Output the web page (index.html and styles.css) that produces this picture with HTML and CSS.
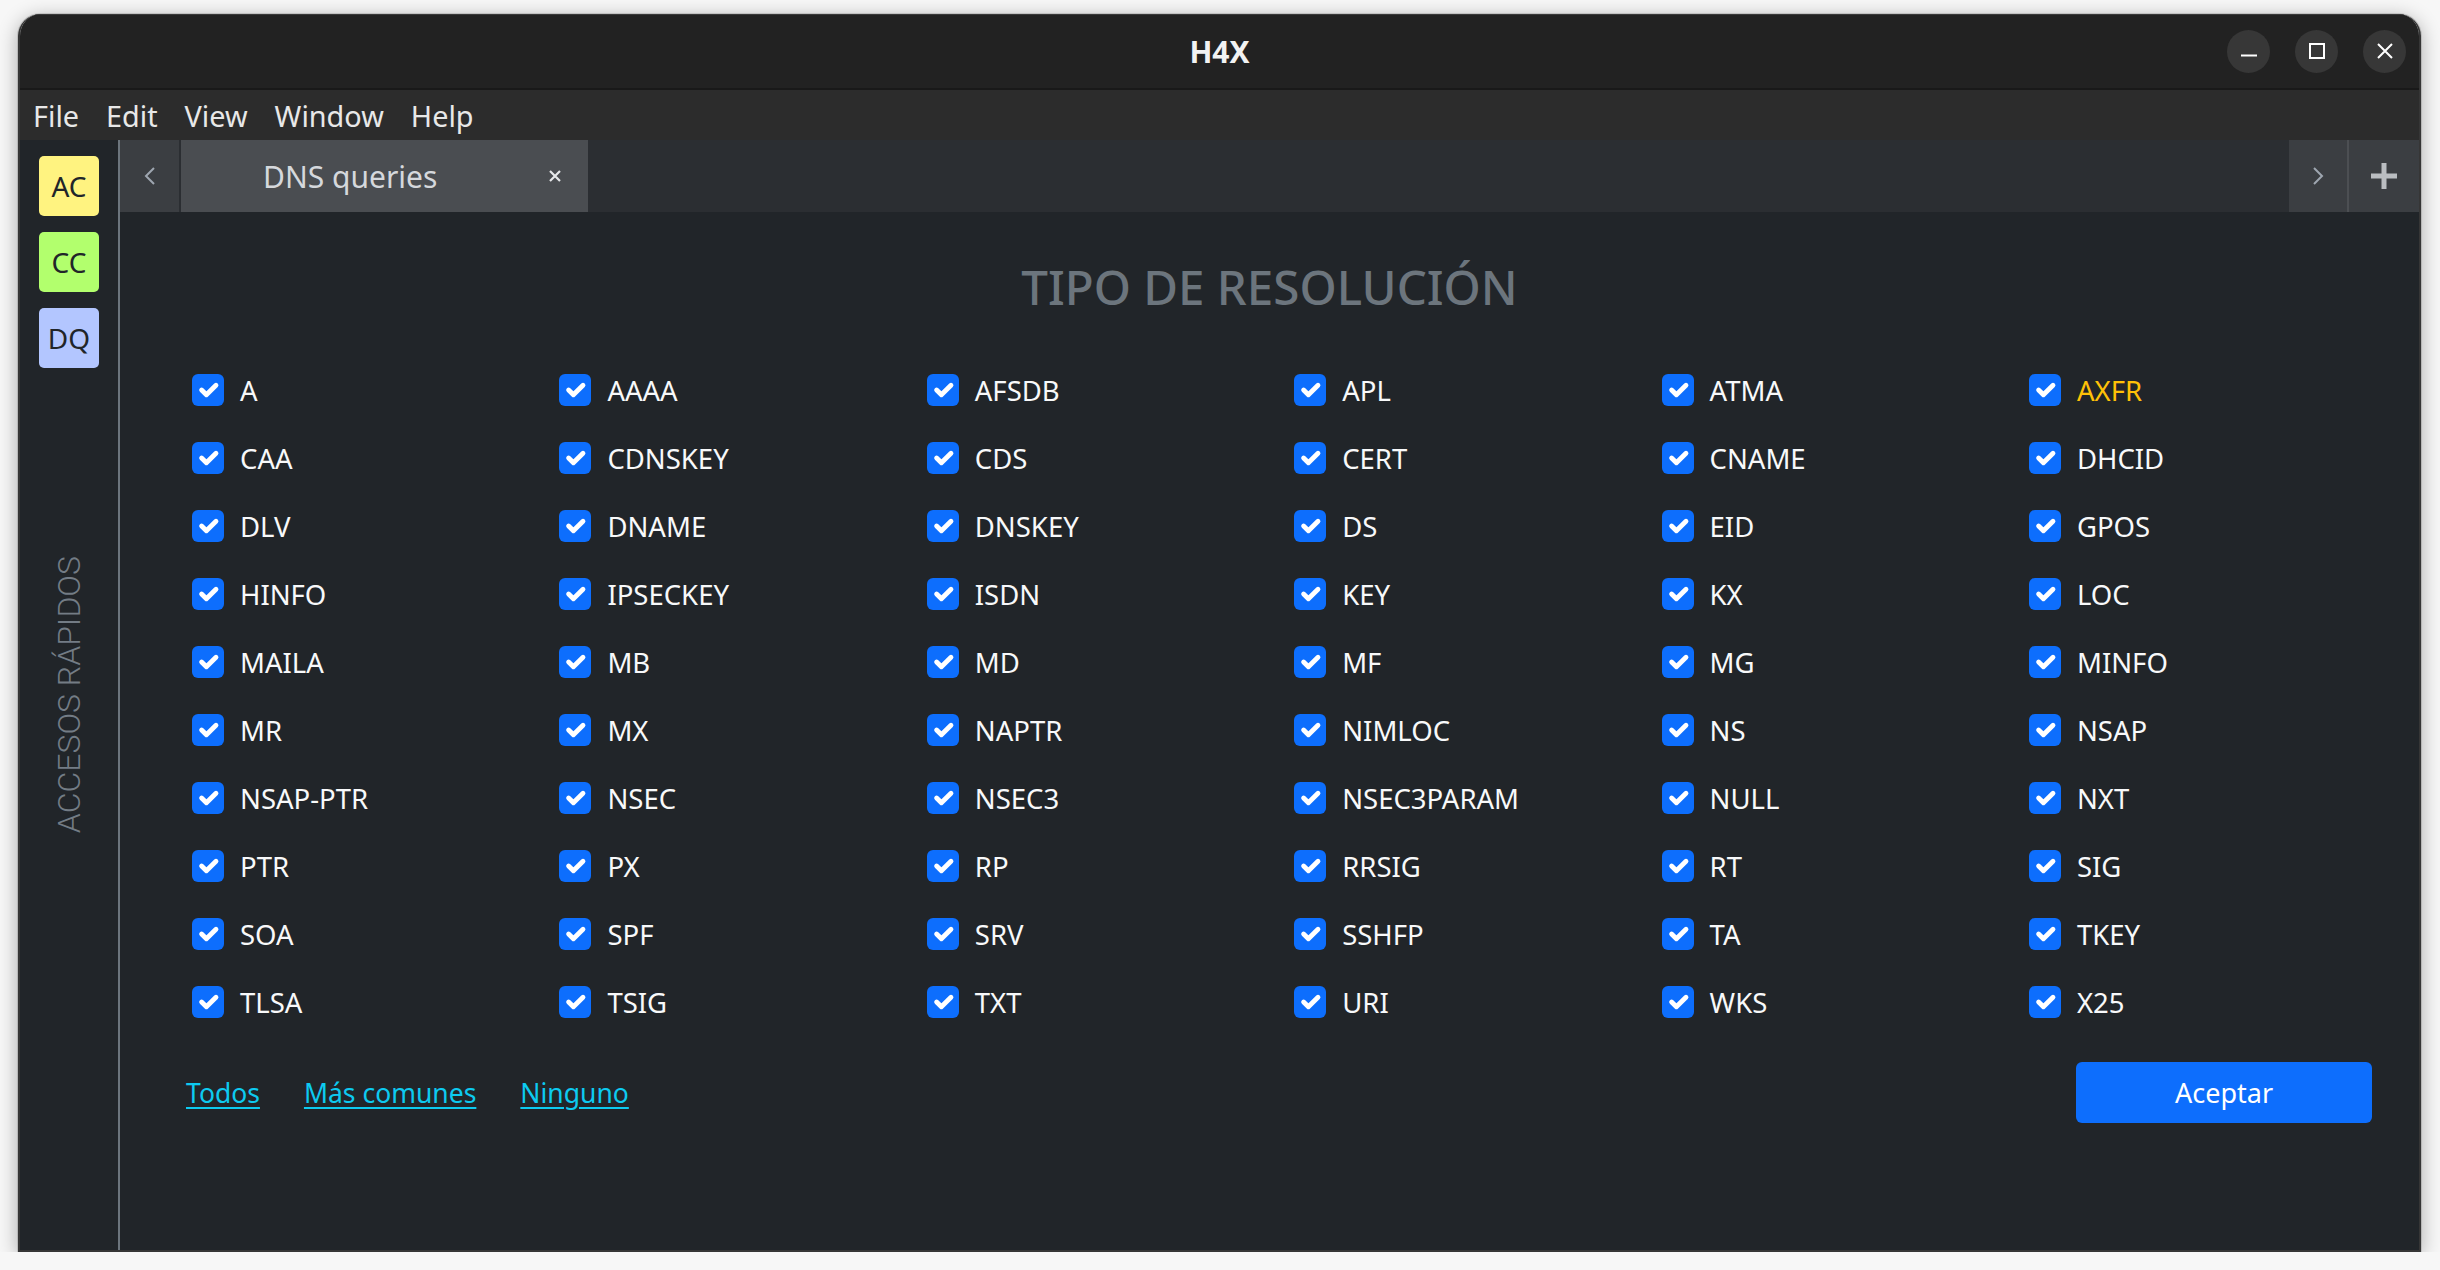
FILE: index.html
```html
<!DOCTYPE html>
<html lang="es">
<head>
<meta charset="utf-8">
<title>H4X</title>
<link rel="stylesheet" href="styles.css">
</head>
<body>
<div class="window">
  <header class="titlebar">
    <div></div>
    <div class="title">H4X</div>
    <div class="wbtns">
      <span class="wbtn"><svg width="16" height="16" viewBox="0 0 16 16"><path d="M0 12.5h16" stroke="#fff" stroke-width="2"/></svg></span>
      <span class="wbtn"><svg width="16" height="16" viewBox="0 0 16 16"><rect x="1" y="1" width="14" height="14" fill="none" stroke="#fff" stroke-width="2"/></svg></span>
      <span class="wbtn"><svg width="16" height="16" viewBox="0 0 16 16"><path d="M1 1l14 14M15 1L1 15" stroke="#fff" stroke-width="2"/></svg></span>
    </div>
  </header>
  <nav class="menubar">
    <span>File</span><span>Edit</span><span>View</span><span>Window</span><span>Help</span>
  </nav>
  <div class="body">
    <aside class="sidebar">
      <div class="quick">
        <span class="qa ac">AC</span>
        <span class="qa cc">CC</span>
        <span class="qa dq">DQ</span>
      </div>
      <div class="vtext">ACCESOS RÁPIDOS</div>
    </aside>
    <main class="main">
      <div class="tabbar">
        <span class="tb-btn"><svg width="12" height="20" viewBox="0 0 12 20"><path d="M10 2L2 10l8 8" fill="none" stroke="#9ea6b0" stroke-width="2"/></svg></span>
        <div class="tab"><span>DNS queries</span><svg class="tab-x" width="12" height="12" viewBox="0 0 12 12"><path d="M1 1l10 10M11 1L1 11" stroke="#e6e8ea" stroke-width="2.2"/></svg></div>
        <div class="tab-fill"></div>
        <span class="tb-btn next"><svg width="12" height="20" viewBox="0 0 12 20"><path d="M2 2l8 8-8 8" fill="none" stroke="#9ea6b0" stroke-width="2"/></svg></span>
        <span class="tb-plus"><svg width="26" height="26" viewBox="0 0 26 26"><path d="M13 0v26M0 13h26" stroke="#babdc1" stroke-width="5"/></svg></span>
      </div>
      <section class="content">
        <h1 class="heading">TIPO DE RESOLUCIÓN</h1>
        <div class="grid">
          <label class="item"><span class="cb"><svg viewBox="0 0 20 20"><path d="m6 10 3 3 6-6" fill="none" stroke="#fff" stroke-width="3" stroke-linecap="round" stroke-linejoin="round"/></svg></span>A</label>
          <label class="item"><span class="cb"><svg viewBox="0 0 20 20"><path d="m6 10 3 3 6-6" fill="none" stroke="#fff" stroke-width="3" stroke-linecap="round" stroke-linejoin="round"/></svg></span>AAAA</label>
          <label class="item"><span class="cb"><svg viewBox="0 0 20 20"><path d="m6 10 3 3 6-6" fill="none" stroke="#fff" stroke-width="3" stroke-linecap="round" stroke-linejoin="round"/></svg></span>AFSDB</label>
          <label class="item"><span class="cb"><svg viewBox="0 0 20 20"><path d="m6 10 3 3 6-6" fill="none" stroke="#fff" stroke-width="3" stroke-linecap="round" stroke-linejoin="round"/></svg></span>APL</label>
          <label class="item"><span class="cb"><svg viewBox="0 0 20 20"><path d="m6 10 3 3 6-6" fill="none" stroke="#fff" stroke-width="3" stroke-linecap="round" stroke-linejoin="round"/></svg></span>ATMA</label>
          <label class="item warn"><span class="cb"><svg viewBox="0 0 20 20"><path d="m6 10 3 3 6-6" fill="none" stroke="#fff" stroke-width="3" stroke-linecap="round" stroke-linejoin="round"/></svg></span>AXFR</label>

          <label class="item"><span class="cb"><svg viewBox="0 0 20 20"><path d="m6 10 3 3 6-6" fill="none" stroke="#fff" stroke-width="3" stroke-linecap="round" stroke-linejoin="round"/></svg></span>CAA</label>
          <label class="item"><span class="cb"><svg viewBox="0 0 20 20"><path d="m6 10 3 3 6-6" fill="none" stroke="#fff" stroke-width="3" stroke-linecap="round" stroke-linejoin="round"/></svg></span>CDNSKEY</label>
          <label class="item"><span class="cb"><svg viewBox="0 0 20 20"><path d="m6 10 3 3 6-6" fill="none" stroke="#fff" stroke-width="3" stroke-linecap="round" stroke-linejoin="round"/></svg></span>CDS</label>
          <label class="item"><span class="cb"><svg viewBox="0 0 20 20"><path d="m6 10 3 3 6-6" fill="none" stroke="#fff" stroke-width="3" stroke-linecap="round" stroke-linejoin="round"/></svg></span>CERT</label>
          <label class="item"><span class="cb"><svg viewBox="0 0 20 20"><path d="m6 10 3 3 6-6" fill="none" stroke="#fff" stroke-width="3" stroke-linecap="round" stroke-linejoin="round"/></svg></span>CNAME</label>
          <label class="item"><span class="cb"><svg viewBox="0 0 20 20"><path d="m6 10 3 3 6-6" fill="none" stroke="#fff" stroke-width="3" stroke-linecap="round" stroke-linejoin="round"/></svg></span>DHCID</label>

          <label class="item"><span class="cb"><svg viewBox="0 0 20 20"><path d="m6 10 3 3 6-6" fill="none" stroke="#fff" stroke-width="3" stroke-linecap="round" stroke-linejoin="round"/></svg></span>DLV</label>
          <label class="item"><span class="cb"><svg viewBox="0 0 20 20"><path d="m6 10 3 3 6-6" fill="none" stroke="#fff" stroke-width="3" stroke-linecap="round" stroke-linejoin="round"/></svg></span>DNAME</label>
          <label class="item"><span class="cb"><svg viewBox="0 0 20 20"><path d="m6 10 3 3 6-6" fill="none" stroke="#fff" stroke-width="3" stroke-linecap="round" stroke-linejoin="round"/></svg></span>DNSKEY</label>
          <label class="item"><span class="cb"><svg viewBox="0 0 20 20"><path d="m6 10 3 3 6-6" fill="none" stroke="#fff" stroke-width="3" stroke-linecap="round" stroke-linejoin="round"/></svg></span>DS</label>
          <label class="item"><span class="cb"><svg viewBox="0 0 20 20"><path d="m6 10 3 3 6-6" fill="none" stroke="#fff" stroke-width="3" stroke-linecap="round" stroke-linejoin="round"/></svg></span>EID</label>
          <label class="item"><span class="cb"><svg viewBox="0 0 20 20"><path d="m6 10 3 3 6-6" fill="none" stroke="#fff" stroke-width="3" stroke-linecap="round" stroke-linejoin="round"/></svg></span>GPOS</label>

          <label class="item"><span class="cb"><svg viewBox="0 0 20 20"><path d="m6 10 3 3 6-6" fill="none" stroke="#fff" stroke-width="3" stroke-linecap="round" stroke-linejoin="round"/></svg></span>HINFO</label>
          <label class="item"><span class="cb"><svg viewBox="0 0 20 20"><path d="m6 10 3 3 6-6" fill="none" stroke="#fff" stroke-width="3" stroke-linecap="round" stroke-linejoin="round"/></svg></span>IPSECKEY</label>
          <label class="item"><span class="cb"><svg viewBox="0 0 20 20"><path d="m6 10 3 3 6-6" fill="none" stroke="#fff" stroke-width="3" stroke-linecap="round" stroke-linejoin="round"/></svg></span>ISDN</label>
          <label class="item"><span class="cb"><svg viewBox="0 0 20 20"><path d="m6 10 3 3 6-6" fill="none" stroke="#fff" stroke-width="3" stroke-linecap="round" stroke-linejoin="round"/></svg></span>KEY</label>
          <label class="item"><span class="cb"><svg viewBox="0 0 20 20"><path d="m6 10 3 3 6-6" fill="none" stroke="#fff" stroke-width="3" stroke-linecap="round" stroke-linejoin="round"/></svg></span>KX</label>
          <label class="item"><span class="cb"><svg viewBox="0 0 20 20"><path d="m6 10 3 3 6-6" fill="none" stroke="#fff" stroke-width="3" stroke-linecap="round" stroke-linejoin="round"/></svg></span>LOC</label>

          <label class="item"><span class="cb"><svg viewBox="0 0 20 20"><path d="m6 10 3 3 6-6" fill="none" stroke="#fff" stroke-width="3" stroke-linecap="round" stroke-linejoin="round"/></svg></span>MAILA</label>
          <label class="item"><span class="cb"><svg viewBox="0 0 20 20"><path d="m6 10 3 3 6-6" fill="none" stroke="#fff" stroke-width="3" stroke-linecap="round" stroke-linejoin="round"/></svg></span>MB</label>
          <label class="item"><span class="cb"><svg viewBox="0 0 20 20"><path d="m6 10 3 3 6-6" fill="none" stroke="#fff" stroke-width="3" stroke-linecap="round" stroke-linejoin="round"/></svg></span>MD</label>
          <label class="item"><span class="cb"><svg viewBox="0 0 20 20"><path d="m6 10 3 3 6-6" fill="none" stroke="#fff" stroke-width="3" stroke-linecap="round" stroke-linejoin="round"/></svg></span>MF</label>
          <label class="item"><span class="cb"><svg viewBox="0 0 20 20"><path d="m6 10 3 3 6-6" fill="none" stroke="#fff" stroke-width="3" stroke-linecap="round" stroke-linejoin="round"/></svg></span>MG</label>
          <label class="item"><span class="cb"><svg viewBox="0 0 20 20"><path d="m6 10 3 3 6-6" fill="none" stroke="#fff" stroke-width="3" stroke-linecap="round" stroke-linejoin="round"/></svg></span>MINFO</label>

          <label class="item"><span class="cb"><svg viewBox="0 0 20 20"><path d="m6 10 3 3 6-6" fill="none" stroke="#fff" stroke-width="3" stroke-linecap="round" stroke-linejoin="round"/></svg></span>MR</label>
          <label class="item"><span class="cb"><svg viewBox="0 0 20 20"><path d="m6 10 3 3 6-6" fill="none" stroke="#fff" stroke-width="3" stroke-linecap="round" stroke-linejoin="round"/></svg></span>MX</label>
          <label class="item"><span class="cb"><svg viewBox="0 0 20 20"><path d="m6 10 3 3 6-6" fill="none" stroke="#fff" stroke-width="3" stroke-linecap="round" stroke-linejoin="round"/></svg></span>NAPTR</label>
          <label class="item"><span class="cb"><svg viewBox="0 0 20 20"><path d="m6 10 3 3 6-6" fill="none" stroke="#fff" stroke-width="3" stroke-linecap="round" stroke-linejoin="round"/></svg></span>NIMLOC</label>
          <label class="item"><span class="cb"><svg viewBox="0 0 20 20"><path d="m6 10 3 3 6-6" fill="none" stroke="#fff" stroke-width="3" stroke-linecap="round" stroke-linejoin="round"/></svg></span>NS</label>
          <label class="item"><span class="cb"><svg viewBox="0 0 20 20"><path d="m6 10 3 3 6-6" fill="none" stroke="#fff" stroke-width="3" stroke-linecap="round" stroke-linejoin="round"/></svg></span>NSAP</label>

          <label class="item"><span class="cb"><svg viewBox="0 0 20 20"><path d="m6 10 3 3 6-6" fill="none" stroke="#fff" stroke-width="3" stroke-linecap="round" stroke-linejoin="round"/></svg></span>NSAP-PTR</label>
          <label class="item"><span class="cb"><svg viewBox="0 0 20 20"><path d="m6 10 3 3 6-6" fill="none" stroke="#fff" stroke-width="3" stroke-linecap="round" stroke-linejoin="round"/></svg></span>NSEC</label>
          <label class="item"><span class="cb"><svg viewBox="0 0 20 20"><path d="m6 10 3 3 6-6" fill="none" stroke="#fff" stroke-width="3" stroke-linecap="round" stroke-linejoin="round"/></svg></span>NSEC3</label>
          <label class="item"><span class="cb"><svg viewBox="0 0 20 20"><path d="m6 10 3 3 6-6" fill="none" stroke="#fff" stroke-width="3" stroke-linecap="round" stroke-linejoin="round"/></svg></span>NSEC3PARAM</label>
          <label class="item"><span class="cb"><svg viewBox="0 0 20 20"><path d="m6 10 3 3 6-6" fill="none" stroke="#fff" stroke-width="3" stroke-linecap="round" stroke-linejoin="round"/></svg></span>NULL</label>
          <label class="item"><span class="cb"><svg viewBox="0 0 20 20"><path d="m6 10 3 3 6-6" fill="none" stroke="#fff" stroke-width="3" stroke-linecap="round" stroke-linejoin="round"/></svg></span>NXT</label>

          <label class="item"><span class="cb"><svg viewBox="0 0 20 20"><path d="m6 10 3 3 6-6" fill="none" stroke="#fff" stroke-width="3" stroke-linecap="round" stroke-linejoin="round"/></svg></span>PTR</label>
          <label class="item"><span class="cb"><svg viewBox="0 0 20 20"><path d="m6 10 3 3 6-6" fill="none" stroke="#fff" stroke-width="3" stroke-linecap="round" stroke-linejoin="round"/></svg></span>PX</label>
          <label class="item"><span class="cb"><svg viewBox="0 0 20 20"><path d="m6 10 3 3 6-6" fill="none" stroke="#fff" stroke-width="3" stroke-linecap="round" stroke-linejoin="round"/></svg></span>RP</label>
          <label class="item"><span class="cb"><svg viewBox="0 0 20 20"><path d="m6 10 3 3 6-6" fill="none" stroke="#fff" stroke-width="3" stroke-linecap="round" stroke-linejoin="round"/></svg></span>RRSIG</label>
          <label class="item"><span class="cb"><svg viewBox="0 0 20 20"><path d="m6 10 3 3 6-6" fill="none" stroke="#fff" stroke-width="3" stroke-linecap="round" stroke-linejoin="round"/></svg></span>RT</label>
          <label class="item"><span class="cb"><svg viewBox="0 0 20 20"><path d="m6 10 3 3 6-6" fill="none" stroke="#fff" stroke-width="3" stroke-linecap="round" stroke-linejoin="round"/></svg></span>SIG</label>

          <label class="item"><span class="cb"><svg viewBox="0 0 20 20"><path d="m6 10 3 3 6-6" fill="none" stroke="#fff" stroke-width="3" stroke-linecap="round" stroke-linejoin="round"/></svg></span>SOA</label>
          <label class="item"><span class="cb"><svg viewBox="0 0 20 20"><path d="m6 10 3 3 6-6" fill="none" stroke="#fff" stroke-width="3" stroke-linecap="round" stroke-linejoin="round"/></svg></span>SPF</label>
          <label class="item"><span class="cb"><svg viewBox="0 0 20 20"><path d="m6 10 3 3 6-6" fill="none" stroke="#fff" stroke-width="3" stroke-linecap="round" stroke-linejoin="round"/></svg></span>SRV</label>
          <label class="item"><span class="cb"><svg viewBox="0 0 20 20"><path d="m6 10 3 3 6-6" fill="none" stroke="#fff" stroke-width="3" stroke-linecap="round" stroke-linejoin="round"/></svg></span>SSHFP</label>
          <label class="item"><span class="cb"><svg viewBox="0 0 20 20"><path d="m6 10 3 3 6-6" fill="none" stroke="#fff" stroke-width="3" stroke-linecap="round" stroke-linejoin="round"/></svg></span>TA</label>
          <label class="item"><span class="cb"><svg viewBox="0 0 20 20"><path d="m6 10 3 3 6-6" fill="none" stroke="#fff" stroke-width="3" stroke-linecap="round" stroke-linejoin="round"/></svg></span>TKEY</label>

          <label class="item"><span class="cb"><svg viewBox="0 0 20 20"><path d="m6 10 3 3 6-6" fill="none" stroke="#fff" stroke-width="3" stroke-linecap="round" stroke-linejoin="round"/></svg></span>TLSA</label>
          <label class="item"><span class="cb"><svg viewBox="0 0 20 20"><path d="m6 10 3 3 6-6" fill="none" stroke="#fff" stroke-width="3" stroke-linecap="round" stroke-linejoin="round"/></svg></span>TSIG</label>
          <label class="item"><span class="cb"><svg viewBox="0 0 20 20"><path d="m6 10 3 3 6-6" fill="none" stroke="#fff" stroke-width="3" stroke-linecap="round" stroke-linejoin="round"/></svg></span>TXT</label>
          <label class="item"><span class="cb"><svg viewBox="0 0 20 20"><path d="m6 10 3 3 6-6" fill="none" stroke="#fff" stroke-width="3" stroke-linecap="round" stroke-linejoin="round"/></svg></span>URI</label>
          <label class="item"><span class="cb"><svg viewBox="0 0 20 20"><path d="m6 10 3 3 6-6" fill="none" stroke="#fff" stroke-width="3" stroke-linecap="round" stroke-linejoin="round"/></svg></span>WKS</label>
          <label class="item"><span class="cb"><svg viewBox="0 0 20 20"><path d="m6 10 3 3 6-6" fill="none" stroke="#fff" stroke-width="3" stroke-linecap="round" stroke-linejoin="round"/></svg></span>X25</label>
        </div>
        <div class="footer">
          <div class="links">
            <a href="#">Todos</a>
            <a href="#">Más comunes</a>
            <a href="#">Ninguno</a>
          </div>
          <button class="btn" type="button">Aceptar</button>
        </div>
      </section>
    </main>
  </div>
</div>
</body>
</html>
```

FILE: styles.css
```css
html, body {
  margin: 0;
  background: #f7f7f7;
}
body {
  padding: 14px 0 0 18px;
  font-family: "Noto Sans", "DejaVu Sans", sans-serif;
}
.window {
  width: 2403px;
  height: 1238px;
  box-sizing: border-box;
  border: 2px solid #363636;
  border-top: 0;
  border-radius: 22px 22px 0 0;
  overflow: hidden;
  display: flex;
  flex-direction: column;
  box-shadow: 0 4px 20px rgba(0, 0, 0, 0.32), 0 0 0 1px rgba(0, 0, 0, 0.12);
}
.titlebar {
  flex: none;
  height: 74px;
  background: #222222;
  border-bottom: 2px solid #191919;
  box-shadow: inset 0 1px 0 #3a3a3a;
  display: grid;
  grid-template-columns: 1fr auto 1fr;
  align-items: center;
}
.title {
  color: #f2f2f2;
  font-weight: 700;
  font-size: 30px;
}
.wbtns {
  justify-self: end;
  display: flex;
  gap: 25px;
  padding-right: 13px;
}
.wbtn {
  width: 43px;
  height: 43px;
  border-radius: 50%;
  background: #373737;
  display: flex;
  align-items: center;
  justify-content: center;
}
.menubar {
  flex: none;
  height: 50px;
  background: #2c2c2c;
  display: flex;
  align-items: center;
  gap: 27px;
  padding-left: 13px;
  font-size: 28.8px;
  color: #e8e8e8;
}
.body {
  flex: 1;
  display: flex;
  min-height: 0;
}
.sidebar {
  flex: none;
  width: 98px;
  background: #212529;
  border-right: 2px solid #6c757d;
  display: grid;
}
.sidebar > * {
  grid-area: 1 / 1;
}
.quick {
  align-self: start;
  justify-self: center;
  display: flex;
  flex-direction: column;
  gap: 16px;
  padding-top: 16px;
}
.qa {
  width: 60px;
  height: 60px;
  border-radius: 5px;
  display: flex;
  align-items: center;
  justify-content: center;
  font-size: 28px;
  color: #212529;
}
.ac { background: #fff380; }
.cc { background: #b2ff6d; }
.dq { background: #b3c6ff; }
.vtext {
  align-self: center;
  justify-self: center;
  writing-mode: vertical-rl;
  transform: rotate(180deg);
  font-family: Roboto, "Noto Sans", sans-serif;
  font-weight: 300;
  font-size: 32px;
  line-height: 32px;
  color: #737c85;
  white-space: nowrap;
}
.main {
  flex: 1;
  min-width: 0;
  display: flex;
  flex-direction: column;
  background: #212529;
}
.tabbar {
  flex: none;
  height: 72px;
  display: flex;
  background: #2b2e32;
}
.tb-btn {
  width: 59px;
  background: #3b3e42;
  display: flex;
  align-items: center;
  justify-content: center;
}
.tb-btn.next {
  width: 58px;
}
.tab {
  width: 407px;
  margin-left: 2px;
  box-sizing: border-box;
  background: #4a4d51;
  display: flex;
  align-items: center;
  padding: 0 27px 0 82px;
  font-size: 30px;
  color: #d5d8dc;
}
.tab-x {
  margin-left: auto;
}
.tab-fill {
  flex: 1;
}
.tb-plus {
  width: 70px;
  border-left: 2px solid #4c4f53;
  background: #3b3e42;
  display: flex;
  align-items: center;
  justify-content: center;
}
.content {
  flex: 1;
  padding-top: 45px;
  display: flex;
  flex-direction: column;
}
.heading {
  margin: 0;
  text-align: center;
  font-size: 47.5px;
  line-height: 60px;
  font-weight: 500;
  color: #6c757d;
}
.grid {
  margin: 39px 0 0 72px;
  display: grid;
  grid-template-columns: repeat(6, 367.4px);
  grid-auto-rows: 68px;
}
.item {
  display: flex;
  align-items: center;
  gap: 16px;
  font-size: 27.5px;
  color: #f8f9fa;
}
.item.warn {
  color: #ffc107;
}
.cb {
  flex: none;
  width: 32px;
  height: 32px;
  border-radius: 6px;
  background: #0d6efd;
  display: flex;
}
.cb svg {
  width: 32px;
  height: 32px;
}
.footer {
  margin-top: 26px;
  padding: 0 47px 0 66px;
  display: flex;
  align-items: center;
  justify-content: space-between;
}
.links {
  display: flex;
  gap: 44px;
}
.links a {
  color: #0dcaf0;
  font-size: 26.5px;
  text-decoration: underline;
  text-decoration-thickness: 2px;
  text-underline-offset: 4px;
}
.btn {
  width: 296px;
  height: 61px;
  border: 0;
  border-radius: 6px;
  background: #0d6efd;
  color: #ffffff;
  font-family: inherit;
  font-size: 27px;
}
```
